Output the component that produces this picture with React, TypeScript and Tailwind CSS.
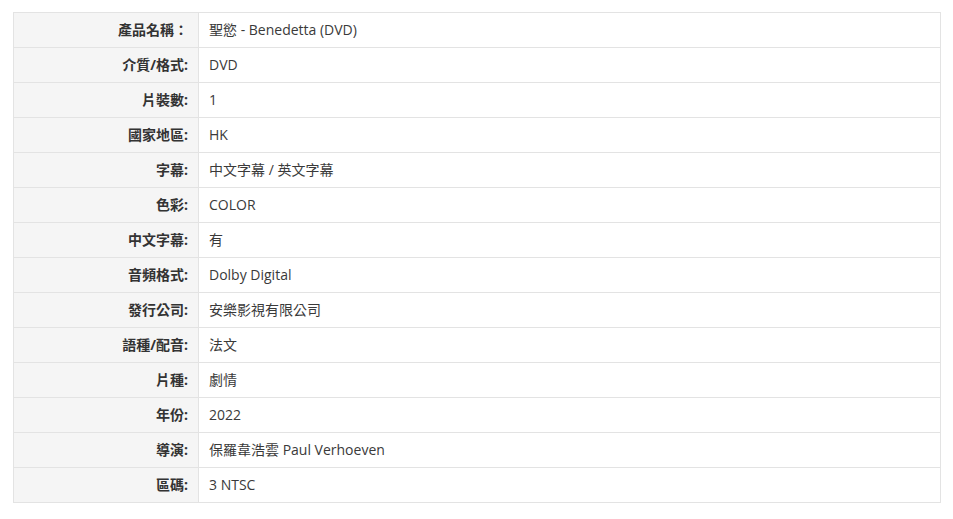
const rows: [string, string][] = [
    ['產品名稱：', '聖慾 - Benedetta (DVD)'],
    ['介質/格式:', 'DVD'],
    ['片裝數:', '1'],
    ['國家地區:', 'HK'],
    ['字幕:', '中文字幕 / 英文字幕'],
    ['色彩:', 'COLOR'],
    ['中文字幕:', '有'],
    ['音頻格式:', 'Dolby Digital'],
    ['發行公司:', '安樂影視有限公司'],
    ['語種/配音:', '法文'],
    ['片種:', '劇情'],
    ['年份:', '2022'],
    ['導演:', '保羅韋浩雲 Paul Verhoeven'],
    ['區碼:', '3 NTSC'],
];

export default function App() {
    return (
        <div
            className="w-[953px] h-[519px] bg-white pt-3 pl-[13px]"
            style={{ fontFamily: '"Open Sans", "Noto Sans CJK TC", sans-serif' }}
        >
            <table className="w-[928px] border-collapse text-[14px] text-[#333]">
                <tbody>
                    {rows.map(([label, value]) => (
                        <tr key={label} className="h-[35px]">
                            <th className="w-[185px] border border-[#e3e3e3] bg-[#f5f5f5] pr-[10px] pb-[1px] text-right font-bold align-middle">
                                {label}
                            </th>
                            <td className="border border-[#e3e3e3] pl-[10px] pb-[1px] text-left align-middle text-[#3a3a3a]">
                                {value}
                            </td>
                        </tr>
                    ))}
                </tbody>
            </table>
        </div>
    );
}
